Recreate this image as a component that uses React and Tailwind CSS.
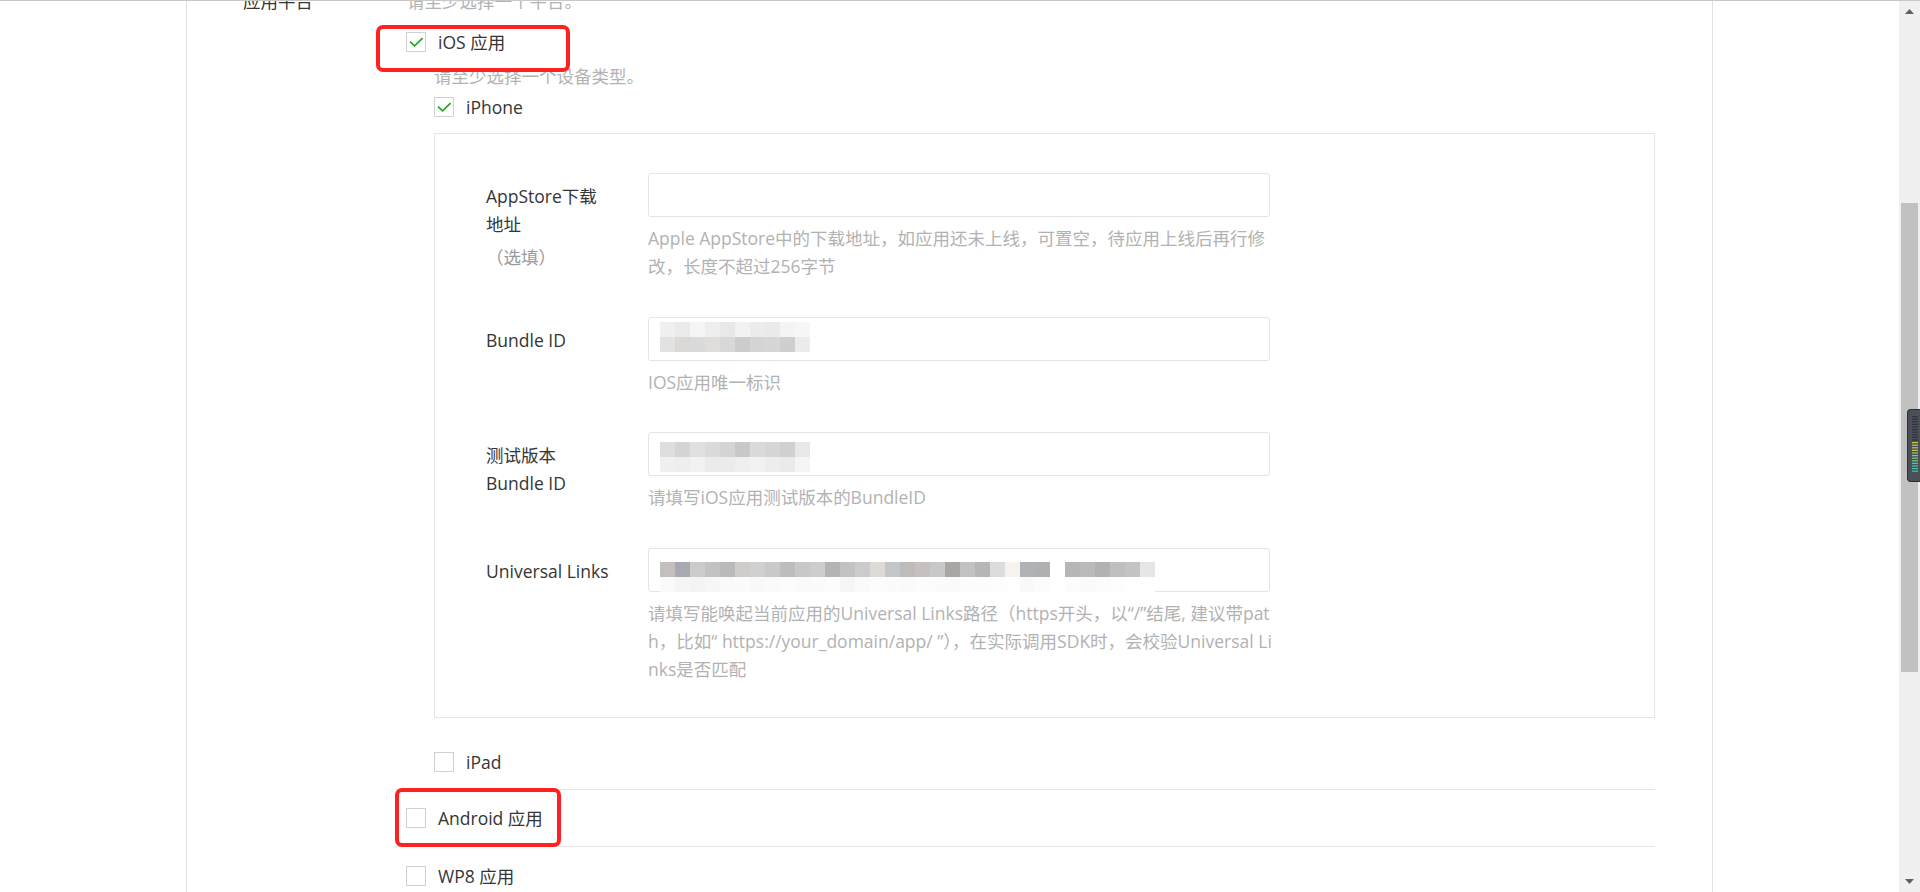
import React from "react";

const Check = ({ checked }) => (
  <span className="relative w-[20px] h-[20px] shrink-0 border border-[#d1d1d1] bg-white">
    {checked && (
      <svg className="absolute -left-px -top-px" width="20" height="20" viewBox="0 0 20 20" fill="none">
        <path d="M4 9.6L8.6 13.8L16.6 6.2" stroke="#1aad19" strokeWidth="1.7" />
      </svg>
    )}
  </span>
);

const CheckRow = ({ checked, label, className = "" }) => (
  <div className={`flex items-center gap-[12px] h-[28px] ${className}`}>
    <Check checked={checked} />
    <span className="leading-[28px] whitespace-nowrap">{label}</span>
  </div>
);

// pixelated (blurred) values in the inputs
const bundleMosaic = [
  ["bg-[#f0f0f0]", "bg-[#ebebeb]", "bg-[#f5f5f5]", "bg-[#eeeeee]", "bg-[#e8e8e8]", "bg-[#f2f2f2]", "bg-[#ececec]", "bg-[#eaeaea]", "bg-[#f4f4f4]", "bg-[#f7f7f7]"],
  ["bg-[#e2e2e2]", "bg-[#dcd8d6]", "bg-[#d8dadc]", "bg-[#e0dcd9]", "bg-[#d8d8d8]", "bg-[#cccccc]", "bg-[#d4d4d4]", "bg-[#d8d6d5]", "bg-[#cfcfcf]", "bg-[#ececec]"],
];

const testMosaic = [
  ["bg-[#dedede]", "bg-[#d4d4d4]", "bg-[#e0e0e0]", "bg-[#dadada]", "bg-[#d2d4d6]", "bg-[#c8c8c8]", "bg-[#dadada]", "bg-[#d6d6d6]", "bg-[#d0d0d0]", "bg-[#e8e8e8]"],
  ["bg-[#f0f0f0]", "bg-[#eeeeee]", "bg-[#f2f2f2]", "bg-[#ebebeb]", "bg-[#ebebeb]", "bg-[#efefef]", "bg-[#f2f2f2]", "bg-[#ededed]", "bg-[#eaeaea]", "bg-[#f5f5f5]"],
];

const linkMosaic = [
  ["bg-[#c4bfbd]", "bg-[#a9aab1]", "bg-[#cbcbcb]", "bg-[#c2c2c2]", "bg-[#b9bab9]", "bg-[#cfcdcb]", "bg-[#d0d0d0]", "bg-[#c9c9c9]", "bg-[#bdbdbd]", "bg-[#c8c8c8]", "bg-[#cdcdcd]", "bg-[#b4b4b4]", "bg-[#c2c2c2]", "bg-[#cbcbcb]", "bg-[#dedad5]", "bg-[#c3c7cb]", "bg-[#bebcbb]", "bg-[#c6c0be]", "bg-[#c8c8c8]", "bg-[#a9a7a5]", "bg-[#c2c2c2]", "bg-[#b6b6b6]", "bg-[#dcdcdc]", "bg-[#f6f3ee]", "bg-[#b0b3b5]", "bg-[#b0b0b0]", "bg-white", "bg-[#b6b6b6]", "bg-[#bababa]", "bg-[#b2b2b2]", "bg-[#bfbfbf]", "bg-[#c4c4c4]", "bg-[#e6e6e6]"],
  ["bg-[#fafafa]", "bg-[#f5f5f5]", "bg-[#f3f3f3]", "bg-[#f7f7f7]", "bg-[#fafafa]", "bg-[#fbfbfb]", "bg-[#f8f8f8]", "bg-[#fafafa]", "bg-[#fcfcfc]", "bg-[#fafafa]", "bg-[#fbfbfb]", "bg-[#fcfcfc]", "bg-[#f6f6f6]", "bg-[#fafafa]", "bg-[#fcfcfc]", "bg-[#fbfbfb]", "bg-[#fafafa]", "bg-[#fcfcfc]", "bg-[#fbfbfb]", "bg-[#fafafa]", "bg-[#fcfcfc]", "bg-[#fcfcfc]", "bg-[#fdfdfd]", "bg-[#fefefe]", "bg-[#f9f9f9]", "bg-[#fcfcfc]", "bg-white", "bg-[#fcfcfc]", "bg-[#fafafa]", "bg-[#fcfcfc]", "bg-[#fdfdfd]", "bg-white", "bg-white"],
];

const Mosaic = ({ rows }) => (
  <div className="flex flex-col">
    {rows.map((row, i) => (
      <div key={i} className="flex">
        {row.map((c, j) => (
          <span key={j} className={`w-[15px] h-[15px] ${c}`} />
        ))}
      </div>
    ))}
  </div>
);

const FormRow = ({ label, mosaic, help, className = "" }) => (
  <div className={`flex ${className}`}>
    <div className="w-[162px] shrink-0 pt-[9px] leading-[28px] whitespace-nowrap">{label}</div>
    <div className="w-[660px]">
      <div className="w-[622px] h-[44px] border border-[#e4e4e4] rounded-[3px] bg-white">{mosaic}</div>
      <div className="mt-[7px] leading-[28px] text-[#b2b2b2] whitespace-nowrap">
        {help.map((line) => (
          <div key={line}>{line}</div>
        ))}
      </div>
    </div>
  </div>
);

const Scrollbar = () => (
  <div className="w-[21px] shrink-0 bg-[#f0f0f0] flex flex-col">
    <div className="h-[21px] flex items-center justify-center">
      <svg width="9" height="5" viewBox="0 0 9 5">
        <path d="M0 5L4.5 0L9 5Z" fill="#606060" />
      </svg>
    </div>
    <div className="flex-1">
      <div className="mt-[181px] mx-[2px] h-[469px] bg-[#c1c1c1]" />
    </div>
    <div className="h-[21px] flex items-center justify-center">
      <svg width="9" height="5" viewBox="0 0 9 5">
        <path d="M0 0L4.5 5L9 0Z" fill="#606060" />
      </svg>
    </div>
  </div>
);

const Meter = () => {
  const bars = [
    "#30333a", "#30333a", "#30333a", "#30333a", "#30333a", "#30333a", "#30333a", "#30333a", "#30333a", "#30333a",
    "#c9c93e", "#c9c93e", "#c2c846", "#b4c74e", "#a6c856", "#8fca62", "#7ccb6c", "#6bcb7a", "#58ca8a", "#48c99a", "#3ec8a8", "#38c6b0",
  ];
  return (
    <div className="absolute right-0 top-[408px] w-[13px] h-[73px] rounded-l-[4px] bg-[#4b4f5a] border border-r-0 border-[#2b2e35]">
      <svg className="absolute left-[4px] top-[6px]" width="6" height="58" viewBox="0 0 6 58">
        {bars.map((c, i) => (
          <rect key={i} x="0" y={i * 2.6} width="6" height="1.2" fill={c} />
        ))}
      </svg>
    </div>
  );
};

export default function App() {
  return (
    <div className="relative w-[1920px] h-[892px] flex overflow-hidden bg-white border-t border-[#c8c8c8] text-[17.5px] text-[#353535] font-['Open_Sans','Noto_Sans_CJK_SC',sans-serif]">
      <div className="flex-1 flex min-w-0">
        <div className="w-[186px] shrink-0" />

        <main className="w-[1527px] shrink-0 border-x border-[#e2e2e2] overflow-hidden">
          <div className="-mt-[14px] pl-[56px] flex">
            <div className="w-[152px] shrink-0 leading-[28px] whitespace-nowrap">应用平台</div>

            <div className="w-[1260px]">
              <div className="pl-[12px] leading-[28px] text-[#b2b2b2]">请至少选择一个平台。</div>

              {/* iOS */}
              <div className="relative border-b border-[#e5e5e5] pl-[11px] pt-[13px] pb-[13px]">
                <div className="absolute -left-[19px] top-[10px] w-[194px] h-[47px] border-[4px] border-[#ff2020] rounded-[7px]" />
                <CheckRow checked label="iOS 应用" />
                <div className="pl-[28px]">
                  <div className="mt-[6px] leading-[28px] text-[#b2b2b2]">请至少选择一个设备类型。</div>
                  <CheckRow checked label="iPhone" className="mt-[3px]" />

                  <div className="mt-[12px] border border-[#e5e5e5] pt-[39px] pb-[34px] pl-[51px]">
                    <FormRow
                      label={
                        <>
                          <div>AppStore下载</div>
                          <div>地址</div>
                          <div className="mt-[5px] text-[#9a9a9a]">（选填）</div>
                        </>
                      }
                      help={[
                        "Apple AppStore中的下载地址，如应用还未上线，可置空，待应用上线后再行修",
                        "改，长度不超过256字节",
                      ]}
                    />
                    <FormRow
                      className="mt-[37px]"
                      label="Bundle ID"
                      mosaic={
                        <div className="pl-[11px] pt-[4px]">
                          <Mosaic rows={bundleMosaic} />
                        </div>
                      }
                      help={["IOS应用唯一标识"]}
                    />
                    <FormRow
                      className="mt-[36px]"
                      label={
                        <>
                          <div>测试版本</div>
                          <div>Bundle ID</div>
                        </>
                      }
                      mosaic={
                        <div className="pl-[11px] pt-[9px]">
                          <Mosaic rows={testMosaic} />
                        </div>
                      }
                      help={["请填写iOS应用测试版本的BundleID"]}
                    />
                    <FormRow
                      className="mt-[37px]"
                      label="Universal Links"
                      mosaic={
                        <div className="pl-[11px] pt-[13px]">
                          <Mosaic rows={linkMosaic} />
                        </div>
                      }
                      help={[
                        "请填写能唤起当前应用的Universal Links路径（https开头，以“/”结尾, 建议带pat",
                        "h，比如“ https://your_domain/app/ ”），在实际调用SDK时，会校验Universal Li",
                        "nks是否匹配",
                      ]}
                    />
                  </div>

                  <CheckRow label="iPad" className="mt-[30px]" />
                </div>
              </div>

              {/* Android */}
              <div className="relative border-b border-[#e5e5e5] pl-[11px] h-[57px] flex items-center">
                <div className="absolute left-0 -top-[2px] w-[166px] h-[59px] border-[4px] border-[#ff2020] rounded-[7px]" />
                <CheckRow label="Android 应用" />
              </div>

              {/* WP8 */}
              <div className="pl-[11px] h-[57px] flex items-center">
                <CheckRow label="WP8 应用" />
              </div>
            </div>
          </div>
        </main>

        <div className="flex-1" />
      </div>

      <Scrollbar />
      <Meter />
    </div>
  );
}
